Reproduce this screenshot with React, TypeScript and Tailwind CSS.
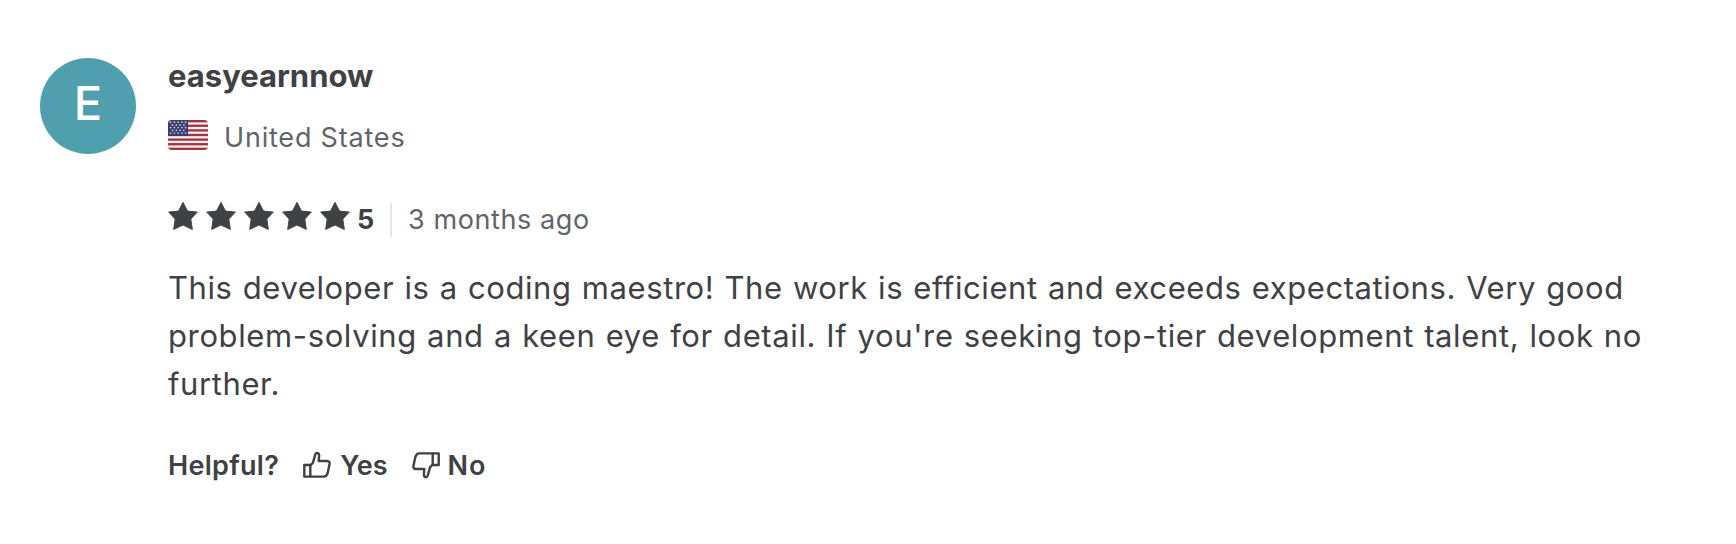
const STAR_COUNT = 5;
const STRIPES = [0, 2, 4, 6, 8, 10, 12];
const CANTON_STARS = [
  [2.6, 2.2], [6.4, 2.2], [10.2, 2.2], [14, 2.2], [17.6, 2.2],
  [4.5, 4.9], [8.3, 4.9], [12.1, 4.9], [15.9, 4.9],
  [2.6, 7.6], [6.4, 7.6], [10.2, 7.6], [14, 7.6], [17.6, 7.6],
  [4.5, 10.3], [8.3, 10.3], [12.1, 10.3], [15.9, 10.3],
  [2.6, 13], [6.4, 13], [10.2, 13], [14, 13], [17.6, 13],
];

function Flag() {
  return (
    <svg className="h-[30px] w-10 shrink-0 rounded-[4px]" viewBox="0 0 40 30">
      <rect width="40" height="30" fill="#f3eef0" />
      {STRIPES.map((i) => (
        <rect key={i} y={(i * 30) / 13} width="40" height={30 / 13} fill="#a3343f" />
      ))}
      <rect width="20" height="16" fill="#3a3b6e" />
      {CANTON_STARS.map(([x, y]) => (
        <circle key={`${x}-${y}`} cx={x} cy={y} r="0.85" fill="#d3d3e6" />
      ))}
    </svg>
  );
}

function Star() {
  return (
    <svg className="h-[30px] w-[30px]" viewBox="0 0 30 30" fill="#404145" stroke="#404145" strokeWidth="1" strokeLinejoin="round">
      <path d="M15 1.4 L19.5 10.1 L29.3 11.1 L22.8 18 L24.3 28.4 L15 24 L5.7 28.4 L7.2 18 L0.7 11.1 L10.5 10.1 Z" />
    </svg>
  );
}

function Thumb({ className }: { className: string }) {
  return (
    <svg className={className} viewBox="0 0 28 28" fill="none" stroke="#404145" strokeWidth="2.4" strokeLinejoin="round">
      <path d="M1.3 14 H7.3 V25.6 H1.3 Z" />
      <path d="M7.3 14.5 L9.9 11.8 L12.3 3.4 Q12.9 1.7 14.2 1.9 Q16.3 2.3 16.1 4.8 L15.7 10 H24 Q27 10.2 26.6 13 L24.6 22.2 Q23.6 25.6 20.8 25.6 H7.3" />
    </svg>
  );
}

export default function App() {
  return (
    <main className="flex h-[544px] w-[1736px] gap-8 bg-white pl-10 pt-[58px] font-['Inter','Liberation_Sans',sans-serif] text-[#404145]">
      <div className="flex size-24 shrink-0 items-center justify-center rounded-full bg-[#4f9fae] pb-2 text-[47px] font-medium leading-none text-white">
        E
      </div>
      <article className="w-[1500px]">
        <h2 className="h-10 text-[31px] font-bold leading-9">easyearnnow</h2>
        <div className="mt-[17px] flex h-10 items-center gap-4">
          <Flag />
          <span className="pt-1.5 text-[27px] leading-10 tracking-[0.8px] text-[#62646a]">United States</span>
        </div>
        <div className="mt-[43px] flex h-10 items-center">
          <div className="flex gap-2 pb-1">
            {Array.from({ length: STAR_COUNT }, (_, i) => (
              <Star key={i} />
            ))}
          </div>
          <b className="ml-[7px] w-[17px] pt-1 text-[27px] font-bold leading-10 tracking-[-0.5px]">5</b>
          <span className="ml-4 mt-1 h-[34px] w-0.5 bg-[#e4e5e7]" />
          <time className="ml-4 pt-1 text-[27px] leading-10 tracking-[0.6px] text-[#62646a]">3 months ago</time>
        </div>
        <p className="mt-[26px] whitespace-nowrap text-[31px] leading-[48px] tracking-[0.6px] [word-spacing:0.9px]">
          <span className="block tracking-[0.59px]">This developer is a coding maestro! The work is efficient and exceeds expectations. Very good</span>
          <span className="block tracking-[0.62px]">problem-solving and a keen eye for detail. If you're seeking top-tier development talent, look no</span>
          <span className="block">further.</span>
        </p>
        <div className="mt-[37px] flex h-10 items-center text-[27px] font-semibold leading-10">
          <span className="pt-0.5 tracking-[0.3px]">Helpful?</span>
          <Thumb className="ml-6 size-7" />
          <span className="ml-[9px] pt-0.5">Yes</span>
          <Thumb className="ml-6 size-7 rotate-180" />
          <span className="ml-2 pt-0.5 tracking-[0.8px]">No</span>
        </div>
      </article>
    </main>
  );
}
